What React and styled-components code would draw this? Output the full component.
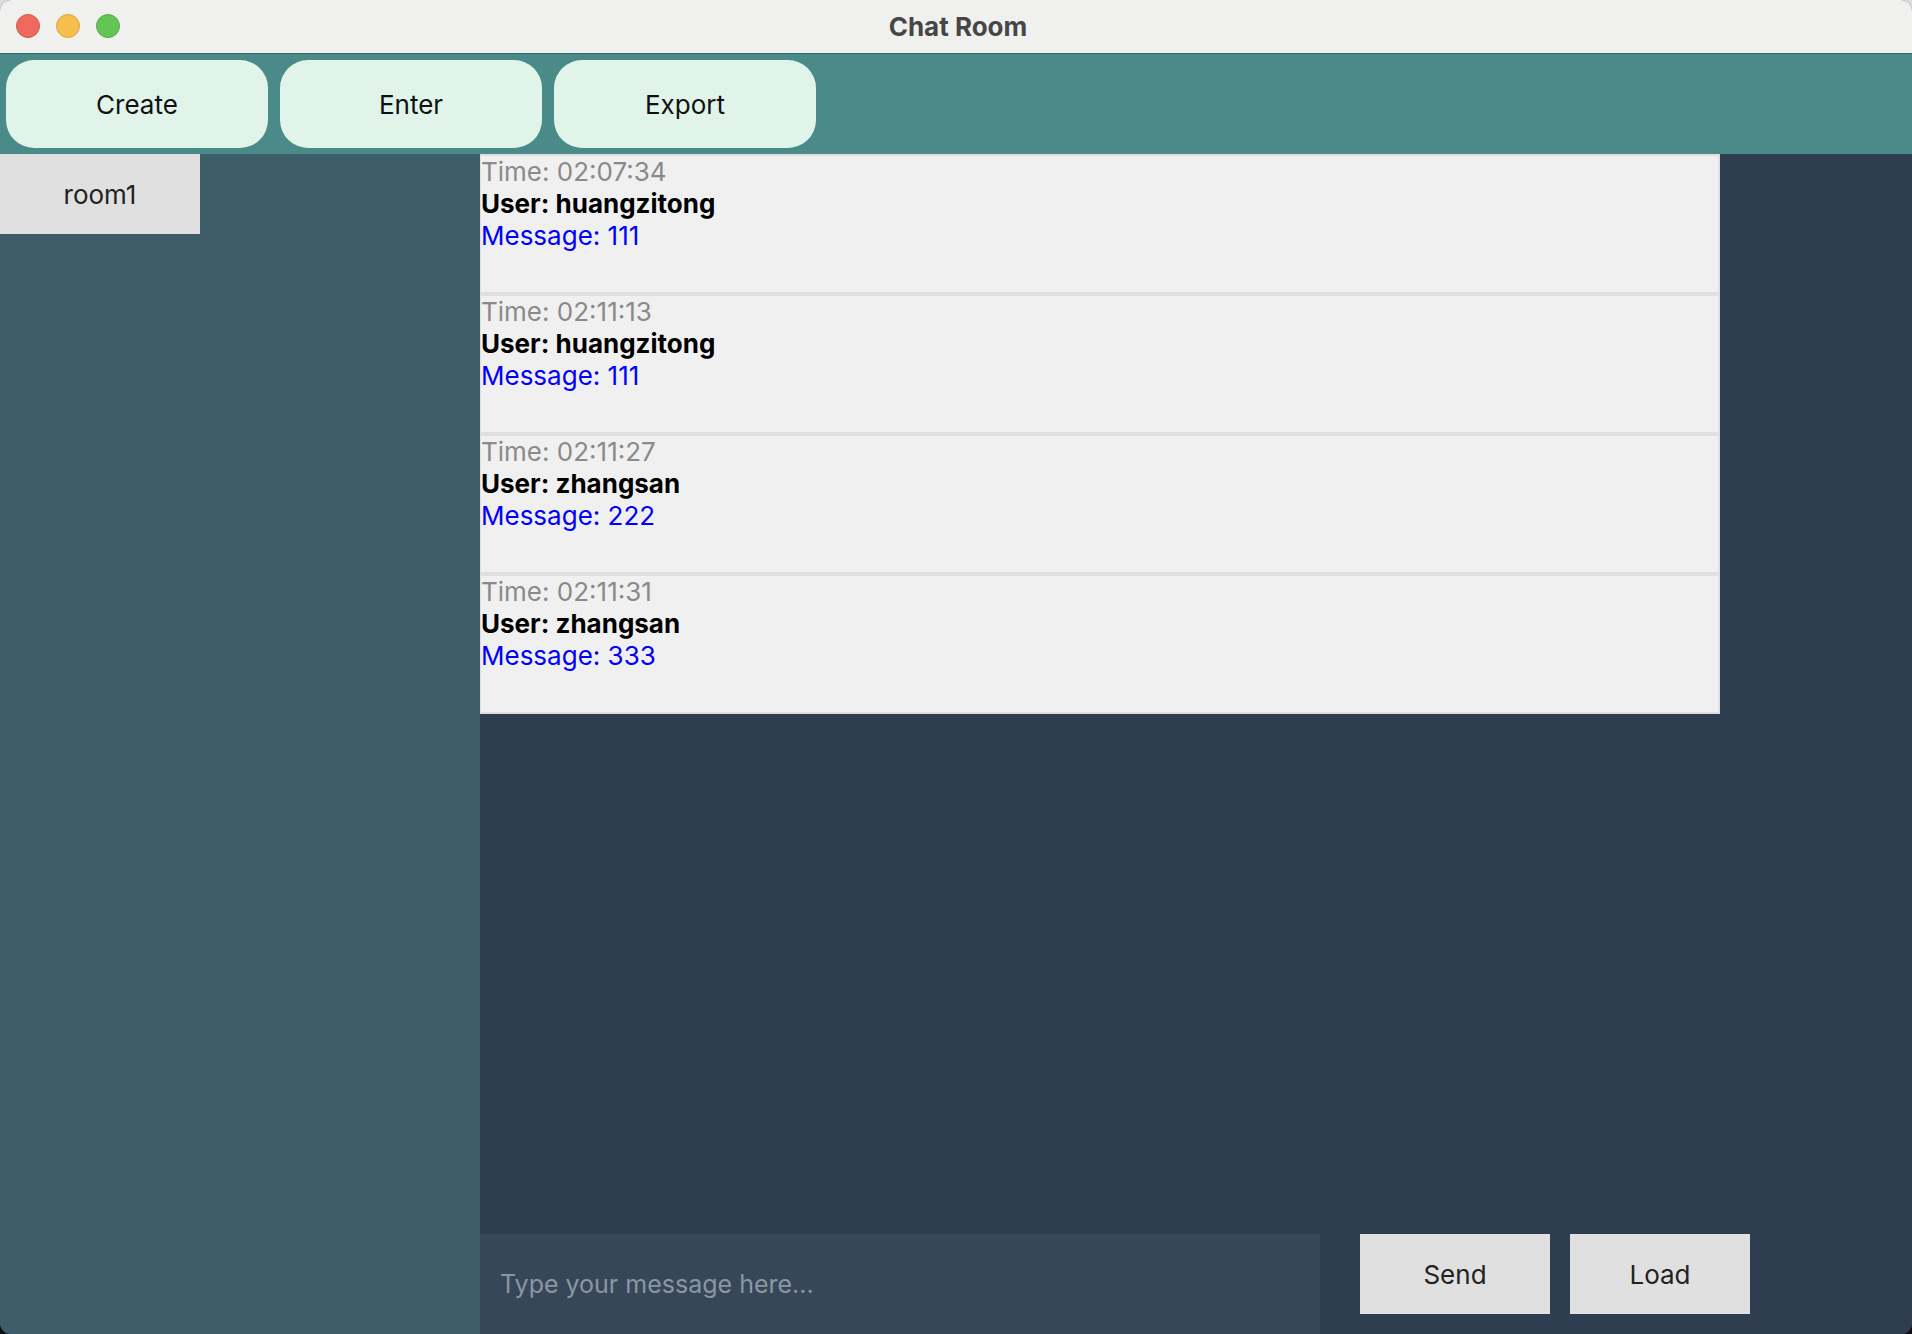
import React from 'react';
import styled, { createGlobalStyle } from 'styled-components';

const GlobalStyle = createGlobalStyle`
  html, body {
    margin: 0;
    padding: 0;
    background: linear-gradient(#dcdcdc 50%, #111 50%);
  }
  body {
    font-family: Inter, "Noto Sans", Roboto, sans-serif;
  }
  * {
    box-sizing: border-box;
  }
`;

// Окно приложения
const Window = styled.div`
  width: 1912px;
  height: 1334px;
  display: flex;
  flex-direction: column;
  border-radius: 11px;
  overflow: hidden;
  background-color: #2e3e50;
`;

const TitleBar = styled.div`
  position: relative;
  height: 54px;
  flex-shrink: 0;
  display: flex;
  align-items: center;
  justify-content: center;
  background-color: #f0f0ee;
  border-bottom: 1px solid #2f6b68;
`;

const Lights = styled.div`
  position: absolute;
  left: 16px;
  top: 14px;
  display: flex;
  gap: 16px;
`;

const Light = styled.span`
  width: 24px;
  height: 24px;
  border-radius: 50%;
  background-color: ${(p) => p.color};
  border: 1px solid ${(p) => p.edge};
`;

const Title = styled.h1`
  margin: 0 0 0 4px;
  font-size: 26px;
  font-weight: 700;
  color: #464646;
`;

const Toolbar = styled.div`
  height: 100px;
  flex-shrink: 0;
  display: flex;
  gap: 12px;
  padding: 6px;
  background-color: #4a8b8a;
`;

const ToolButton = styled.button`
  width: 262px;
  height: 88px;
  border: none;
  border-radius: 28px;
  background-color: #e0f4ea;
  color: #111;
  font-family: inherit;
  font-size: 26px;
`;

const Body = styled.div`
  flex: 1;
  display: flex;
  min-height: 0;
`;

const Sidebar = styled.div`
  width: 480px;
  flex-shrink: 0;
  background-color: #3d5e68;
`;

const RoomItem = styled.div`
  width: 200px;
  height: 80px;
  display: flex;
  align-items: center;
  justify-content: center;
  background-color: #e0e0e0;
  color: #222;
  font-size: 26px;
`;

const Main = styled.div`
  flex: 1;
  display: flex;
  flex-direction: column;
  background-color: #2e3e50;
`;

const MessageList = styled.div`
  width: 1240px;
  display: flex;
  flex-direction: column;
`;

const Card = styled.div`
  height: 140px;
  border: 2px solid #dfdfdf;
  border-left-width: 1px;
  background-color: #f0f0f0;
  font-size: 26px;
  line-height: 32px;
`;

const TimeLine = styled.div`
  color: #8a8a8a;
`;

const UserLine = styled.div`
  color: #000;
  font-weight: 700;
`;

const TextLine = styled.div`
  color: #0000ff;
`;

const Spacer = styled.div`
  flex: 1;
`;

const InputRow = styled.div`
  height: 100px;
  display: flex;
  align-items: flex-start;
`;

const MessageInput = styled.input`
  width: 840px;
  height: 100px;
  border: none;
  outline: none;
  padding: 0 20px;
  background-color: #36475a;
  color: #e0e0e0;
  font-family: inherit;
  font-size: 25px;

  &::placeholder {
    color: #8c96a1;
  }
`;

const ActionButton = styled.button`
  width: ${(p) => p.w}px;
  height: 80px;
  margin-left: ${(p) => p.gap}px;
  border: none;
  background-color: #e0e0e0;
  color: #222;
  font-family: inherit;
  font-size: 26px;
`;

const messages = [
  { time: '02:07:34', user: 'huangzitong', text: '111' },
  { time: '02:11:13', user: 'huangzitong', text: '111' },
  { time: '02:11:27', user: 'zhangsan', text: '222' },
  { time: '02:11:31', user: 'zhangsan', text: '333' },
];

const App = () => {
  return (
    <>
      <GlobalStyle />
      <Window>
        <TitleBar>
          <Lights>
            <Light color="#ee6a5f" edge="#d8564c" />
            <Light color="#f5be4f" edge="#dca73d" />
            <Light color="#62c554" edge="#53ad45" />
          </Lights>
          <Title>Chat Room</Title>
        </TitleBar>

        <Toolbar>
          <ToolButton>Create</ToolButton>
          <ToolButton>Enter</ToolButton>
          <ToolButton>Export</ToolButton>
        </Toolbar>

        <Body>
          <Sidebar>
            <RoomItem>room1</RoomItem>
          </Sidebar>

          <Main>
            <MessageList>
              {messages.map((m, i) => (
                <Card key={i}>
                  <TimeLine>Time: {m.time}</TimeLine>
                  <UserLine>User: {m.user}</UserLine>
                  <TextLine>Message: {m.text}</TextLine>
                </Card>
              ))}
            </MessageList>
            <Spacer />
            <InputRow>
              <MessageInput placeholder="Type your message here..." />
              <ActionButton w={190} gap={40}>Send</ActionButton>
              <ActionButton w={180} gap={20}>Load</ActionButton>
            </InputRow>
          </Main>
        </Body>
      </Window>
    </>
  );
};

export default App;
